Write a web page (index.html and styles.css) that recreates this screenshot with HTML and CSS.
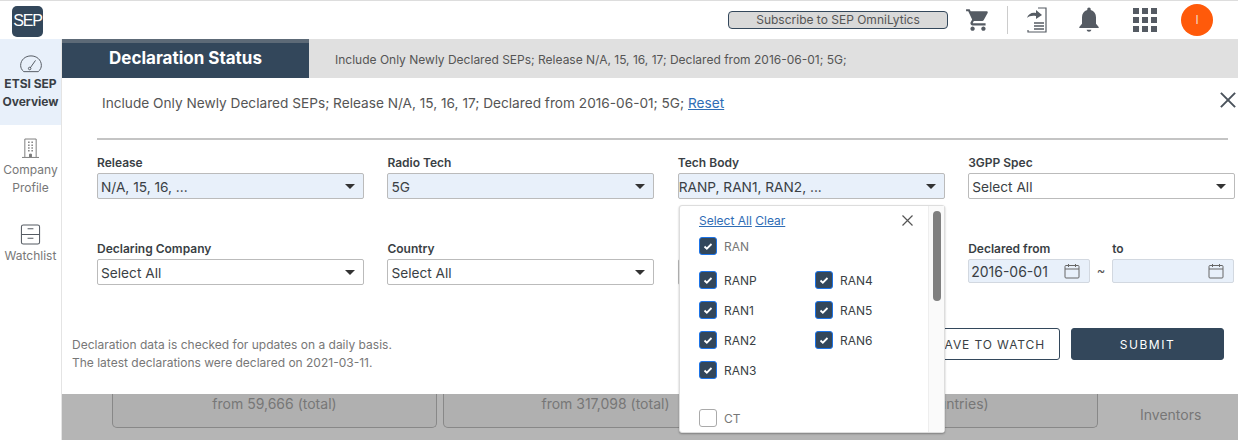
FILE: index.html
```html
<!DOCTYPE html>
<html lang="en">
<head>
  <meta charset="UTF-8" />
  <title>ETSI SEP Overview</title>
  <link rel="stylesheet" href="styles.css">
</head>
<body>

  <header class="topbar">
    <div class="logo">SEP</div>
    <button class="subscribe">Subscribe to SEP OmniLytics</button>
    <svg class="top-icon cart" width="26" height="26" viewBox="0 0 24 24"><path fill="#555b63" d="M7 18c-1.100 0-2 .9-2 2s.9 2 2 2 2-.9 2-2-.9-2-2-2zm10 0c-1.100 0-2 .9-2 2s.9 2 2 2 2-.9 2-2-.9-2-2-2zM1 2v2h2l3.600 7.600L5.200 14c-.1.300-.2.700-.2 1 0 1.100.9 2 2 2h12v-2H7.400c-.1 0-.2-.1-.2-.2v-.1l.9-1.700h7.500c.7 0 1.400-.4 1.700-1l3.600-6.500c.1-.1.1-.3.1-.5 0-.6-.4-1-1-1H5.200l-.9-2H1z"/></svg>
    <span class="top-sep"></span>
    <svg class="top-icon export" width="24" height="28" viewBox="0 0 24 28" fill="none" stroke="#555b63"><path d="M14 2h8v24H4v-2" stroke-width="1.200"/><path d="M3 12c1-4 5-6 9-5V4l6 5-6 4v-3c-4-.5-7 0-9 2z" fill="#555b63" stroke="none"/><path d="M10 17h10M10 20h10M10 23h10" stroke-width="1.600"/></svg>
    <svg class="top-icon bell" width="26" height="28" viewBox="0 0 24 26"><path fill="#555b63" d="M12 1.500c-1 0-1.600.7-1.600 1.600v.7C7.200 4.600 5.500 7.300 5.500 10.500v6L3 19.500v1h18v-1l-2.500-3v-6c0-3.200-1.700-5.900-4.900-6.700v-.7c0-.9-.6-1.600-1.600-1.600zM9.800 22c.2 1.100 1.100 1.800 2.200 1.800s2-.7 2.200-1.800z"/></svg>
    <div class="apps">
      <i></i><i></i><i></i><i></i><i></i><i></i><i></i><i></i><i></i>
    </div>
    <div class="avatar">I</div>
  </header>

  <div class="shell">
    <nav class="sidebar">
      <a class="nav-item active">
        <svg width="24" height="18" viewBox="0 0 26 20" fill="none" stroke="#555b63" stroke-width="1.100"><path d="M5 18.500h16c2.500-2 3.500-4.500 3.500-7C24.500 5.500 19.500 1 13 1S1.500 5.500 1.500 11.500c0 2.500 1 5 3.500 7z"/><path d="M12 14.500l6-8.500" /><circle cx="11.500" cy="15" r="1.400"/></svg>
        <span>ETSI SEP</span>
        <span>Overview</span>
      </a>
      <a class="nav-item">
        <svg width="17" height="20" viewBox="0 0 18 21" fill="none" stroke="#777" stroke-width="1"><path d="M3 20V1h12v19M0 20.500h18"/><path d="M6.500 4.500h1.500M10 4.500h1.500M6.500 7.500h1.500M10 7.500h1.500M6.500 10.500h1.500M10 10.500h1.500M6.500 13.500h1.500M10 13.500h1.500" stroke-width="1.600"/><path d="M8 20v-3h2v3" fill="#777"/></svg>
        <span>Company</span>
        <span>Profile</span>
      </a>
      <a class="nav-item">
        <svg width="21" height="21" viewBox="0 0 21 22" fill="none" stroke="#555b63" stroke-width="1.100"><rect x="1" y="1" width="19" height="20" rx="2"/><path d="M1 11h19M8 5.500V5h5v.5M8 15.500V15h5v.5"/></svg>
        <span>Watchlist</span>
      </a>
    </nav>

    <main class="content">
      <div class="tabs">
        <div class="tab-title">Declaration Status</div>
        <div class="tab-filter">Include Only Newly Declared SEPs; Release N/A, 15, 16, 17; Declared from 2016-06-01; 5G;</div>
      </div>

      <div class="behind">
        <div class="stat-card">from 59,666 (total)</div>
        <div class="stat-card">from 317,098 (total)</div>
        <div class="stat-card stat-third">(in 17 countries)</div>
        <div class="stat-side">Inventors</div>
      </div>

      <section class="modal">
        <button class="modal-close">
          <svg width="16" height="16" viewBox="0 0 18 18" stroke="#4a525b" stroke-width="2.200"><path d="M1 1l16 16M17 1L1 17"/></svg>
        </button>
        <p class="modal-filter">Include Only Newly Declared SEPs; Release N/A, 15, 16, 17; Declared from 2016-06-01; 5G; <a href="#">Reset</a></p>
        <hr class="modal-rule">

        <div class="fields">
          <div class="field">
            <label>Release</label>
            <div class="select filled">N/A, 15, 16, ...</div>
          </div>
          <div class="field">
            <label>Radio Tech</label>
            <div class="select filled">5G</div>
          </div>
          <div class="field">
            <label>Tech Body</label>
            <div class="select filled tight">RANP, RAN1, RAN2, ...</div>
          </div>
          <div class="field">
            <label>3GPP Spec</label>
            <div class="select">Select All</div>
          </div>
          <div class="field">
            <label>Declaring Company</label>
            <div class="select">Select All</div>
          </div>
          <div class="field">
            <label>Country</label>
            <div class="select">Select All</div>
          </div>
          <div class="field">
            <label></label>
            <div class="select"></div>
          </div>
          <div class="field-dates">
            <div class="field">
              <label>Declared from</label>
              <div class="date">2016-06-01
                <svg class="cal" width="16" height="16" viewBox="0 0 16 16" fill="none" stroke="#666" stroke-width="1"><rect x="1" y="2.500" width="14" height="12.500" rx="1"/><path d="M1 6h14M4.500 1v3M11.500 1v3"/></svg>
              </div>
            </div>
            <span class="tilde">~</span>
            <div class="field">
              <label>to</label>
              <div class="date">
                <svg class="cal" width="16" height="16" viewBox="0 0 16 16" fill="none" stroke="#666" stroke-width="1"><rect x="1" y="2.500" width="14" height="12.500" rx="1"/><path d="M1 6h14M4.500 1v3M11.500 1v3"/></svg>
              </div>
            </div>
          </div>
        </div>

        <div class="modal-foot">
          <div class="note">
            <div>Declaration data is checked for updates on a daily basis.</div>
            <div>The latest declarations were declared on 2021-03-11.</div>
          </div>
          <div class="actions">
            <button class="btn btn-line">SAVE TO WATCH</button>
            <button class="btn btn-dark">SUBMIT</button>
          </div>
        </div>

        <div class="dropdown">
          <div class="dd-body">
            <div class="dd-links"><a href="#">Select All</a> <a href="#">Clear</a>
              <svg class="dd-close" width="11" height="11" viewBox="0 0 11 11" stroke="#555" stroke-width="1.200"><path d="M.5.500l10 10M10.500.500l-10 10"/></svg>
            </div>
            <div class="check group on">RAN</div>
            <div class="dd-grid">
              <div class="check on">RANP</div>
              <div class="check on">RAN4</div>
              <div class="check on">RAN1</div>
              <div class="check on">RAN5</div>
              <div class="check on">RAN2</div>
              <div class="check on">RAN6</div>
              <div class="check on">RAN3</div>
            </div>
            <div class="check group ct">CT</div>
          </div>
          <div class="dd-scroll"><div class="dd-thumb"></div></div>
        </div>
      </section>
    </main>
  </div>

</body>
</html>
```

FILE: styles.css
```css
* {
  box-sizing: border-box;
}
html, body {
  height: 100%;
}
body {
  margin: 0;
  height: 440px;
  overflow: hidden;
  font-family: Inter, "Noto Sans", sans-serif;
  color: #3a3f45;
  background: #fff;
}
a {
  color: #2f6db5;
}

/* top bar */
.topbar {
  height: 39px;
  border-top: 1px solid #ddd;
  display: flex;
  align-items: center;
  padding: 0 25px 0 12px;
}
.logo {
  width: 31px;
  height: 31px;
  margin-top: 2px;
  border-radius: 5px;
  background: #33475b;
  color: #fff;
  font-family: "Liberation Sans", sans-serif;
  font-size: 16px;
  letter-spacing: -1.200px;
  line-height: 30px;
  text-align: center;
}
.subscribe {
  margin-left: auto;
  width: 220px;
  height: 18px;
  padding: 0;
  border: 1px solid #33475b;
  border-radius: 4px;
  background: #d9d9d9;
  color: #555;
  font-family: inherit;
  font-size: 12px;
  line-height: 16px;
}
.top-icon {
  flex: none;
}
.cart {
  margin-left: 17px;
}
.top-sep {
  width: 1px;
  height: 28px;
  margin-left: 16px;
  background: #ccc;
}
.export {
  margin-left: 16px;
}
.bell {
  margin-left: 28px;
}
.apps {
  margin-left: 31px;
  display: grid;
  grid-template-columns: repeat(3, 6px);
  gap: 3px;
}
.apps i {
  width: 6px;
  height: 6px;
  background: #555b63;
}
.avatar {
  margin-left: 24px;
  width: 32px;
  height: 32px;
  border-radius: 50%;
  background: #ff5a0a;
  color: #f3d9c8;
  font-size: 12px;
  line-height: 32px;
  text-align: center;
}

/* page */
.shell {
  display: flex;
  height: 401px;
}
.sidebar {
  width: 62px;
  flex: none;
  border-right: 1px solid #e4e4e4;
}
.nav-item {
  display: flex;
  flex-direction: column;
  align-items: center;
  height: 85px;
  padding-top: 14px;
  color: #777;
  font-size: 12px;
  line-height: 18px;
}
.nav-item svg {
  margin-bottom: 2px;
}
.nav-item.active {
  height: 86px;
  padding-top: 16px;
  background: #e8f0fa;
  color: #3a3f45;
  font-weight: 700;
}
.nav-item:nth-child(2) {
  padding-top: 13px;
}
.nav-item:nth-child(2) svg {
  margin-bottom: 3px;
}
.content {
  flex: 1;
  position: relative;
  background: #b5b5b5;
  min-width: 0;
}
.tabs {
  display: flex;
  height: 39px;
  background: #e0e0e0;
}
.tab-title {
  width: 247px;
  border-top: 4px solid #5d6a77;
  background: #33475b;
  color: #fff;
  font-size: 17px;
  font-weight: 700;
  line-height: 30px;
  padding-left: 47px;
}
.tab-filter {
  padding-left: 26px;
  font-size: 12px;
  line-height: 41px;
  color: #555;
}

/* what shows under the modal */
.behind {
  display: flex;
  gap: 6px;
  padding: 316px 0 0 50px;
}
.stat-card {
  width: 325px;
  height: 34px;
  padding-top: 1px;
  border: 1px solid #888;
  border-top: 0;
  border-radius: 0 0 5px 5px;
  background: #b0b0b0;
  color: #777;
  font-size: 14px;
  text-align: center;
}
.stat-third {
  width: 324px;
}
.stat-side {
  margin-left: 36px;
  padding-top: 12px;
  color: #777;
  font-size: 14px;
}

/* modal */
.modal {
  position: absolute;
  left: 0;
  right: 0;
  top: 39px;
  height: 316px;
  background: #fff;
  padding: 16px 4px 0 35px;
}
.modal-close {
  position: absolute;
  right: 2px;
  top: 14px;
  padding: 0;
  border: 0;
  background: none;
  line-height: 0;
}
.modal-filter {
  margin: 0 0 0 5px;
  font-size: 13.660px;
  line-height: 18px;
  color: #555;
}
.modal-rule {
  margin: 26px 6px 0 0;
  border: 0;
  border-top: 2px solid #c4c4c4;
}
.fields {
  margin-top: 15px;
  display: grid;
  grid-template-columns: repeat(4, 267px);
  column-gap: 23.400px;
  row-gap: 42px;
}
.field label {
  display: block;
  height: 20px;
  font-size: 12px;
  font-weight: 600;
  line-height: 16px;
  color: #3a3f45;
}
.select {
  position: relative;
  height: 26px;
  margin-top: -2px;
  padding-left: 3px;
  border: 1px solid #bbb;
  border-radius: 2px;
  font-size: 13.700px;
  line-height: 26px;
  color: #3a3f45;
}
.select.filled {
  background: #e8f0fa;
}
.select.tight {
  padding-left: 0;
}
.select::after {
  content: "";
  position: absolute;
  right: 8px;
  top: 10px;
  border: 5px solid transparent;
  border-top: 5px solid #333;
  border-bottom: 0;
}
.field-dates {
  display: flex;
  align-items: flex-start;
}
.field-dates .field {
  width: 122px;
}
.date {
  display: flex;
  align-items: center;
  justify-content: space-between;
  height: 24px;
  margin-top: -2px;
  padding: 0 9px 0 2px;
  border: 1px solid #d2d8e0;
  border-radius: 2px;
  background: #e8f0fa;
  font-size: 14px;
}
.cal {
  margin-left: auto;
}
.tilde {
  width: 22px;
  margin-top: 19px;
  font-size: 13px;
  line-height: 20px;
  text-align: center;
  color: #555;
}

/* foot of the modal */
.modal-foot {
  margin: 43px 10px 0 -25px;
  display: flex;
  justify-content: space-between;
  align-items: flex-start;
}
.note {
  padding-top: 8px;
  font-size: 12px;
  line-height: 18px;
  color: #777;
}
.actions {
  display: flex;
  gap: 11px;
}
.btn {
  height: 32px;
  padding: 0;
  border-radius: 3px;
  font-family: inherit;
  font-size: 12px;
  letter-spacing: 1.500px;
}
.btn-line {
  width: 139px;
  border: 1px solid #33475b;
  background: #fff;
  color: #3a3f45;
  letter-spacing: 0.900px;
}
.btn-dark {
  width: 153px;
  border: 1px solid #33475b;
  background: #33475b;
  color: #fff;
}

/* tech body dropdown */
.dropdown {
  position: absolute;
  left: 617px;
  top: 127px;
  width: 266px;
  height: 228px;
  display: flex;
  background: #fff;
  border: 1px solid #ddd;
  border-radius: 3px;
  box-shadow: 0 1px 2px rgba(0, 0, 0, 0.3);
  z-index: 2;
}
.dd-body {
  flex: 1;
  padding: 7px 0 0 19px;
  font-size: 12px;
  overflow: hidden;
}
.dd-links {
  position: relative;
  line-height: 16px;
}
.dd-close {
  position: absolute;
  right: 15px;
  top: 2px;
}
.check {
  display: flex;
  align-items: center;
  height: 16px;
  color: #3a3f45;
}
.check::before {
  content: "";
  flex: none;
  width: 16px;
  height: 16px;
  margin-right: 7px;
  border: 1px solid #aaa;
  border-radius: 3px;
  background: #fff;
}
.check.on::before {
  border: 1px solid #1b73e8;
  background: #33475b url("data:image/svg+xml,%3Csvg xmlns='http://www.w3.org/2000/svg' width='14' height='14'%3E%3Cpath d='M3.500 7.500l2.300 2.200 4.700-4.700' fill='none' stroke='%23fff' stroke-width='1.800'/%3E%3C/svg%3E") center no-repeat;
}
.check.group {
  margin-top: 9px;
  color: #777;
}
.dd-grid {
  margin-top: 18px;
  display: grid;
  grid-template-columns: 116px 100px;
  row-gap: 14px;
}
.check.ct {
  margin-top: 32px;
}
.dd-scroll {
  width: 16px;
  flex: none;
  border-left: 1px solid #eee;
  background: #fafafa;
  padding: 5px 3px 0 4px;
}
.dd-thumb {
  width: 8px;
  height: 90px;
  border-radius: 4px;
  background: #7f7f7f;
}
```
